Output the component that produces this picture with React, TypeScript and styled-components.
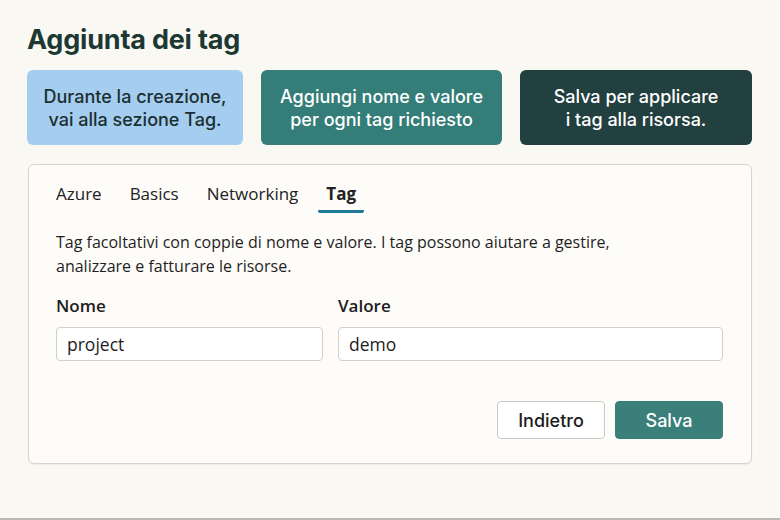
import styled, { createGlobalStyle } from 'styled-components';

const GlobalStyle = createGlobalStyle`
  html, body {
    margin: 0;
    padding: 0;
    background: #faf8f3;
  }
  * {
    box-sizing: border-box;
  }
`;

const Page = styled.main`
  height: 520px;
  padding: 24px 28px 0 27px;
  border-bottom: 2px solid #b9b8b3;
  font-family: Inter, 'Open Sans', sans-serif;
`;

const Title = styled.h1`
  margin: 0 0 14px;
  font-size: 27px;
  line-height: 32px;
  font-weight: 700;
  color: #1d3833;
  letter-spacing: -0.2px;
`;

const Steps = styled.div`
  display: grid;
  grid-template-columns: 216px 241px 232px;
  gap: 18px;
`;

type Tone = 'light' | 'mid' | 'dark';

const toneColors: Record<Tone, { bg: string; fg: string }> = {
  light: { bg: '#a5cdef', fg: '#1b2f31' },
  mid: { bg: '#347d78', fg: '#ffffff' },
  dark: { bg: '#22403f', fg: '#ffffff' },
};

const Step = styled.div<{ $tone: Tone }>`
  height: 75px;
  border-radius: 6px;
  display: flex;
  align-items: center;
  justify-content: center;
  text-align: center;
  font-size: 18px;
  line-height: 23px;
  font-weight: 500;
  background: ${(p) => toneColors[p.$tone].bg};
  color: ${(p) => toneColors[p.$tone].fg};
`;

const Panel = styled.section`
  margin: 19px 0 0 1px;
  background: #fdfcf9;
  border: 1px solid #d6d5d0;
  border-radius: 6px;
  padding: 17px 28px 24px 27px;
  box-shadow: 0 1px 2px rgba(0, 0, 0, 0.06);
  font-family: 'Open Sans', sans-serif;
  color: #1d1d1d;
`;

const Tabs = styled.nav`
  display: flex;
  gap: 12px;
  margin-left: -8px;
`;

const Tab = styled.div<{ $active?: boolean }>`
  padding: 0 8px 4px;
  font-size: 17px;
  line-height: 24px;
  font-weight: ${(p) => (p.$active ? 700 : 400)};
  color: #222;
  border-bottom: 3px solid ${(p) => (p.$active ? '#1f7896' : 'transparent')};
  border-radius: 0 0 2px 2px;
`;

const Description = styled.p`
  margin: 17px 0 16px;
  font-size: 16px;
  line-height: 24px;
  color: #1f1f1f;
`;

const Fields = styled.div`
  display: grid;
  grid-template-columns: 267px 1fr;
  gap: 15px;
`;

const Field = styled.label`
  display: flex;
  flex-direction: column;
  gap: 9px;
`;

const Label = styled.span`
  font-size: 17px;
  line-height: 24px;
  font-weight: 600;
  color: #1d1d1d;
`;

const Input = styled.input`
  height: 34px;
  border: 1.5px solid #cfcecb;
  border-radius: 4px;
  background: #ffffff;
  padding: 0 10px;
  font-family: 'Open Sans', sans-serif;
  font-size: 17.5px;
  color: #1d1d1d;
  outline: none;
`;

const Actions = styled.div`
  display: flex;
  justify-content: flex-end;
  gap: 10px;
  margin-top: 40px;
`;

const Button = styled.button<{ $primary?: boolean }>`
  width: 108px;
  height: 38px;
  border-radius: 4px;
  font-family: Inter, sans-serif;
  font-size: 18px;
  font-weight: 500;
  border: 1.5px solid ${(p) => (p.$primary ? '#3a7f7a' : '#cbcac6')};
  background: ${(p) => (p.$primary ? '#3a7f7a' : '#ffffff')};
  color: ${(p) => (p.$primary ? '#ffffff' : '#1d1d1d')};
`;

export default function App() {
  const tabs = ['Azure', 'Basics', 'Networking', 'Tag'];

  return (
    <>
      <GlobalStyle />
      <Page>
        <Title>Aggiunta dei tag</Title>
        <Steps>
          <Step $tone="light">
            Durante la creazione,
            <br />
            vai alla sezione Tag.
          </Step>
          <Step $tone="mid">
            Aggiungi nome e valore
            <br />
            per ogni tag richiesto
          </Step>
          <Step $tone="dark">
            Salva per applicare
            <br />i tag alla risorsa.
          </Step>
        </Steps>
        <Panel>
          <Tabs>
            {tabs.map((t) => (
              <Tab key={t} $active={t === 'Tag'}>
                {t}
              </Tab>
            ))}
          </Tabs>
          <Description>
            Tag facoltativi con coppie di nome e valore. I tag possono aiutare a gestire,
            <br />
            analizzare e fatturare le risorse.
          </Description>
          <Fields>
            <Field>
              <Label>Nome</Label>
              <Input defaultValue="project" />
            </Field>
            <Field>
              <Label>Valore</Label>
              <Input defaultValue="demo" />
            </Field>
          </Fields>
          <Actions>
            <Button>Indietro</Button>
            <Button $primary>Salva</Button>
          </Actions>
        </Panel>
      </Page>
    </>
  );
}
